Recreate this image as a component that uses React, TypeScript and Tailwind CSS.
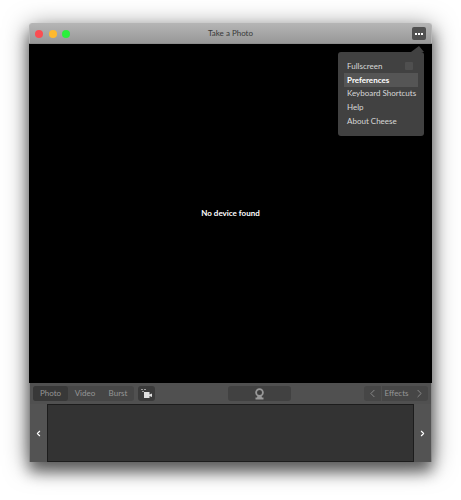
import { ChevronLeft, ChevronRight } from 'lucide-react'

const font = { fontFamily: 'Lato, sans-serif' }

// Icons
const CameraSwitchIcon = () => (
    <svg className="h-[9px] w-[11px]" viewBox="0 0 11 9" fill="#e0e0e0">
        <path d="M0 0h2v1H0zM3 0h2v1H3zM1 2h2v1H1z" fill="#a0a0a0" />
        <path d="M3 3h5.500v6H3zM8.500 5.500L11 4.500v3.500L8.500 7z" />
    </svg>
)

const WebcamIcon = () => (
    <svg className="h-[12px] w-[11px]" viewBox="0 0 11 12" fill="none">
        <circle cx="5.5" cy="4.500" r="3.400" stroke="#989898" strokeWidth="1.800" />
        <circle cx="5.5" cy="4.500" r="1.300" fill="#3a3a3a" />
        <path d="M3.500 8h4l.5 1.500h1.500V11.500h-8V9.500H3z" fill="#989898" />
    </svg>
)

const MoreIcon = () => (
    <div className="flex gap-[1px]">
        <span className="h-[2px] w-[2px] bg-white" />
        <span className="h-[2px] w-[2px] bg-white" />
        <span className="h-[2px] w-[2px] bg-white" />
    </div>
)

const menuItems = ['Keyboard Shortcuts', 'Help', 'About Cheese']

export default function App() {
    return (
        <div className="h-[500px] w-[461px] overflow-hidden bg-white pl-[29px] pt-[23px]" style={font}>
            <div className="relative flex h-[439px] w-[403px] flex-col rounded-t-[3px] shadow-[0_10px_14px_rgba(0,0,0,0.45),0_4px_24px_rgba(0,0,0,0.5)]">
                {/* Title bar */}
                <header className="relative flex h-[20px] shrink-0 items-center justify-between rounded-t-[3px] border border-b-0 border-[#b5b5b5] bg-gradient-to-b from-[#b4b4b4] to-[#989898] pl-[5px] pr-[5px]">
                    <div className="flex gap-[5.500px]">
                        <span className="h-[8px] w-[8px] rounded-full bg-[#fb4d52]" />
                        <span className="h-[8px] w-[8px] rounded-full bg-[#ffb92e]" />
                        <span className="h-[8px] w-[8px] rounded-full bg-[#2af03c]" />
                    </div>
                    <span className="absolute inset-x-0 pb-[1px] text-center text-[8px] leading-none text-[#383838]">Take a Photo</span>
                    <button className="relative flex h-[13px] w-[14px] items-center justify-center rounded-[2px] bg-[#505050]">
                        <MoreIcon />
                    </button>
                </header>

                {/* Viewport */}
                <main className="flex h-[340px] shrink-0 items-center justify-center border-t border-[#8c8c8c] bg-black pb-[2px]">
                    <span className="text-[8px] font-bold text-white">No device found</span>
                </main>

                {/* Toolbar */}
                <div className="flex h-[21px] shrink-0 items-center justify-between border-x border-[#8a8a8a] bg-[#505050] px-[3px]">
                    <div className="flex items-center gap-[4px]">
                        <div className="flex h-[15px] w-[101px] items-center rounded-[3px] bg-[#464646] pb-[1px] text-[8px] text-[#969696]">
                            <span className="flex h-[15px] w-[35px] items-center justify-center rounded-[3px] bg-[#383838] pb-[1px]">Photo</span>
                            <span className="w-[34px] text-center">Video</span>
                            <span className="w-[32px] text-center">Burst</span>
                        </div>
                        <button className="flex h-[15px] w-[17px] items-center justify-center rounded-[3px] bg-[#3a3a3a]">
                            <CameraSwitchIcon />
                        </button>
                    </div>
                    <button className="ml-[-1px] flex h-[15px] w-[63px] items-center justify-center rounded-[3px] bg-[#414141]">
                        <WebcamIcon />
                    </button>
                    <div className="flex h-[15px] w-[64px] items-center rounded-[3px] bg-[#464646] text-[8px] text-[#969696]">
                        <span className="flex h-full w-[18px] items-center justify-center border-r border-[#505050]">
                            <ChevronLeft size={13} strokeWidth={1.5} />
                        </span>
                        <span className="flex-1 pb-[1px] pl-[1px] text-center">Effects</span>
                        <span className="flex w-[18px] items-center justify-center">
                            <ChevronRight size={13} strokeWidth={1.5} />
                        </span>
                    </div>
                </div>

                {/* Thumbnails */}
                <div className="flex min-h-0 flex-1 border-x border-[#8a8a8a] bg-[#535353]">
                    <button className="flex w-[17px] shrink-0 items-center justify-center text-white">
                        <ChevronLeft size={9} strokeWidth={3} />
                    </button>
                    <div className="flex-1 border border-[#1c1c1c] bg-[#333333]" />
                    <button className="flex w-[17px] shrink-0 items-center justify-center text-white">
                        <ChevronRight size={9} strokeWidth={3} />
                    </button>
                </div>

                {/* Popover menu */}
                <div className="absolute left-[309px] top-[29px] w-[86px] rounded-[3px] bg-[#414141] px-[6px] pb-[8px] pt-[7px] text-[8px] text-[#d8d8d8] shadow-[0_1px_3px_rgba(0,0,0,0.5)]">
                    <div className="absolute right-0 top-[-6px] h-0 w-0 border-b-[6px] border-l-[8px] border-r-[5px] border-b-[#414141] border-l-transparent border-r-transparent" />
                    <div className="flex h-[14px] items-center justify-between pb-[1px] pl-[3px] pr-[5px]">
                        <span>Fullscreen</span>
                        <span className="h-[8px] w-[8px] rounded-[1px] bg-[#4f4f4f]" />
                    </div>
                    <div className="flex h-[14px] items-center bg-[#555555] pb-[1px] pl-[3px] font-bold text-white">Preferences</div>
                    {menuItems.map((item) => (
                        <div key={item} className="flex h-[13.700px] items-center whitespace-nowrap pb-[1px] pl-[3px]">{item}</div>
                    ))}
                </div>
            </div>
        </div>
    )
}
